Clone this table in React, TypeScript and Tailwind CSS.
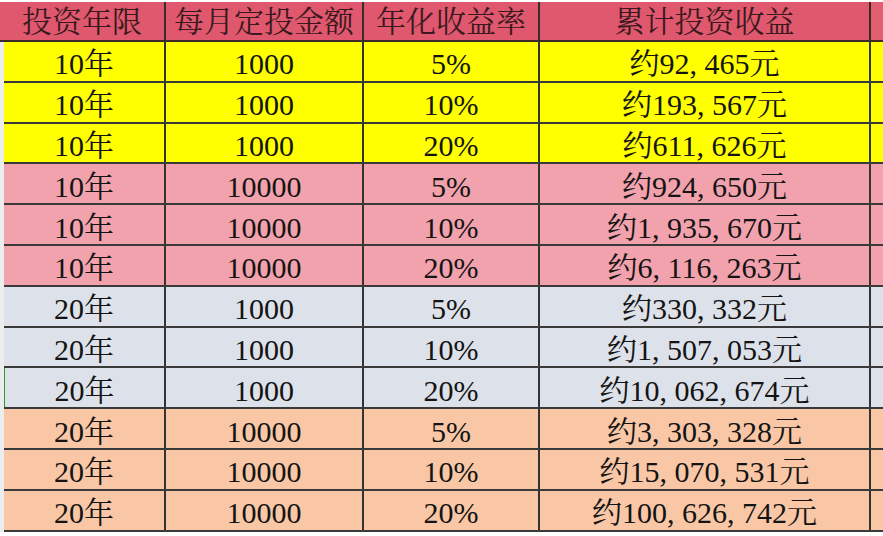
const ROWS = [
  { y: "10年", m: "1000", r: "5%", t: ["92", "465"], bg: "bg-[#ffff00]" },
  { y: "10年", m: "1000", r: "10%", t: ["193", "567"], bg: "bg-[#ffff00]" },
  { y: "10年", m: "1000", r: "20%", t: ["611", "626"], bg: "bg-[#ffff00]" },
  { y: "10年", m: "10000", r: "5%", t: ["924", "650"], bg: "bg-[#f2a2ac]" },
  { y: "10年", m: "10000", r: "10%", t: ["1", "935", "670"], bg: "bg-[#f2a2ac]" },
  { y: "10年", m: "10000", r: "20%", t: ["6", "116", "263"], bg: "bg-[#f2a2ac]" },
  { y: "20年", m: "1000", r: "5%", t: ["330", "332"], bg: "bg-[#dde1e9]" },
  { y: "20年", m: "1000", r: "10%", t: ["1", "507", "053"], bg: "bg-[#dde1e9]" },
  { y: "20年", m: "1000", r: "20%", t: ["10", "062", "674"], bg: "bg-[#dde1e9]", mark: true },
  { y: "20年", m: "10000", r: "5%", t: ["3", "303", "328"], bg: "bg-[#f9c7a6]" },
  { y: "20年", m: "10000", r: "10%", t: ["15", "070", "531"], bg: "bg-[#f9c7a6]" },
  { y: "20年", m: "10000", r: "20%", t: ["100", "626", "742"], bg: "bg-[#f9c7a6]" },
];

const HEADERS = ["投资年限", "每月定投金额", "年化收益率", "累计投资收益"];

function Amount({ parts }: { parts: string[] }) {
  return (
    <span>
      约
      {parts.map((p, i) => (
        <span key={i}>
          {p}
          {i < parts.length - 1 && <span className="inline-block w-[0.5em] text-left">,</span>}
        </span>
      ))}
      元
    </span>
  );
}

export default function App() {
  return (
    <div className="w-[883px] h-[536px] overflow-hidden bg-white pt-[2px] text-[30px] leading-none text-[#141414] [font-family:'Liberation_Serif','Noto_Serif_CJK_SC','Noto_Sans_CJK_SC',serif]">
      <div className="grid grid-cols-[166px_198px_176px_331px_1fr] h-[40px] bg-[#df586d] text-[#3b181e] border-b-2 border-[#3a2a2a]">
        {HEADERS.map((h) => (
          <div key={h} className="flex items-center justify-center border-r-2 border-[#3a2a2a] pt-[2px]">
            {h}
          </div>
        ))}
        <div className="bg-[#e25f72]" />
      </div>
      <div className="bg-[#ededed] pl-[4px]">
        {ROWS.map((row, i) => (
          <div
            key={i}
            className={`grid grid-cols-[162px_198px_176px_331px_1fr] h-[40.8px] border-b-2 border-[#3a3a3a] ${row.bg}`}
          >
            <div
              className={`flex items-center justify-center border-r-2 border-[#333] pt-[6px] ${row.mark ? "border-l border-l-[#2e9a3a]" : ""}`}
            >
              {row.y}
            </div>
            <div className="flex items-center justify-center border-r-2 border-[#333] pt-[6px]">{row.m}</div>
            <div className="flex items-center justify-center border-r-2 border-[#333] pt-[6px]">{row.r}</div>
            <div className="flex items-center justify-center border-r-2 border-[#333] pt-[6px]">
              <Amount parts={row.t} />
            </div>
            <div />
          </div>
        ))}
      </div>
    </div>
  );
}
